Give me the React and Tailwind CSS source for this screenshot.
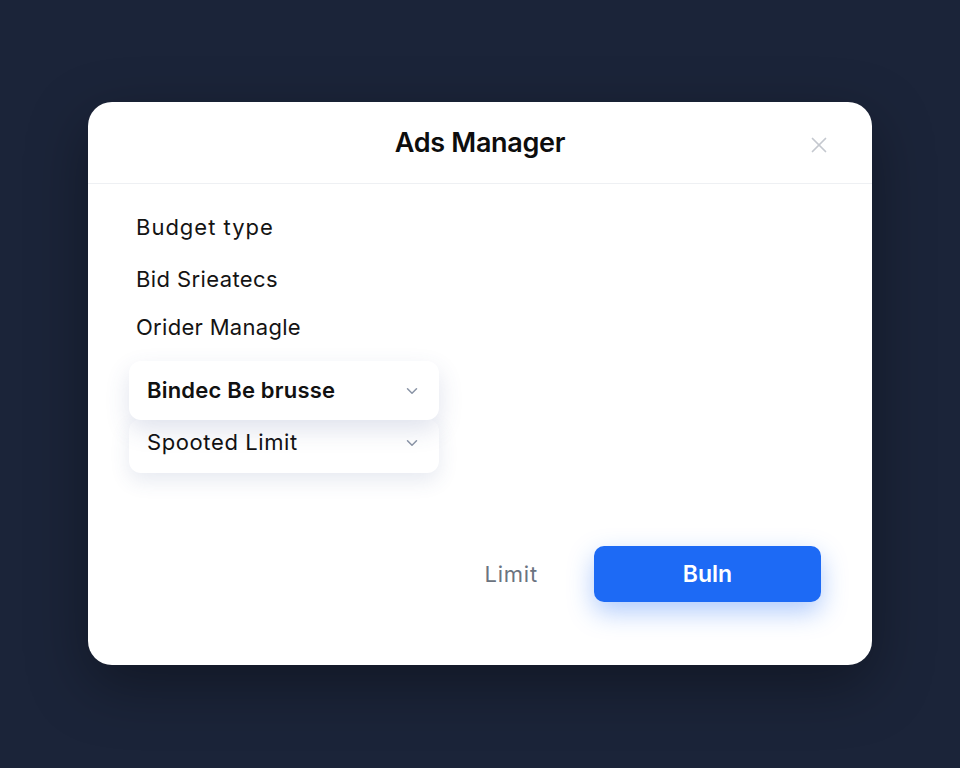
import React from 'react'
import { ChevronDown, X } from 'lucide-react'

function Select({ label, bold = false, raised = false }) {
  return (
    <div
      className={`flex items-center justify-between w-[310px] pl-[18px] pr-[18px] rounded-xl bg-white ${
        raised
          ? 'h-[59px] relative z-10 shadow-[0_10px_24px_rgba(60,80,140,0.16)]'
          : 'h-[54px] -mt-[1px] pb-[7px] shadow-[0_8px_20px_rgba(60,80,140,0.12)]'
      }`}
    >
      <span
        className={`text-[22px] text-[#111] ${
          bold ? 'font-semibold tracking-[0.2px]' : 'font-normal tracking-[0.6px]'
        }`}
      >
        {label}
      </span>
      <ChevronDown className="w-[18px] h-[18px] text-[#8a94a6]" strokeWidth={2} />
    </div>
  )
}

export default function App() {
  return (
    <div
      className="w-[960px] h-[768px] bg-[#1b2439] flex items-start justify-center pt-[102px]"
      style={{ fontFamily: 'Inter, "Noto Sans", sans-serif' }}
    >
      {/* Dialog */}
      <div className="w-[784px] h-[563px] bg-white rounded-[24px] flex flex-col shadow-[0_20px_60px_rgba(0,0,0,0.35)]">
        {/* Header */}
        <div className="relative h-[82px] flex items-center justify-center border-b border-[#eef0f3]">
          <h1 className="text-[27px] font-semibold text-[#0d0d0d] tracking-[-0.3px] mt-[2px]">Ads Manager</h1>
          <button className="absolute right-[40px] top-[30px] text-[#c4c8cf]">
            <X className="w-[26px] h-[26px]" strokeWidth={1.6} />
          </button>
        </div>

        {/* Body */}
        <div className="flex-1 flex flex-col pl-[41px] pr-[51px]">
          <div className="flex flex-col pl-[7px] pt-[30px] gap-[25px] text-[22px] text-[#141414]">
            <p className="leading-[27px] tracking-[1px]">Budget type</p>
            <p className="leading-[27px] tracking-[0.4px]">Bid Srieatecs</p>
            <p className="leading-[27px] tracking-[0.3px] -mt-[4px]">Orider Managle</p>
          </div>

          <div className="flex flex-col mt-[20px]">
            <Select label="Bindec Be brusse" bold raised />
            <Select label="Spooted Limit" />
          </div>

          {/* Footer */}
          <div className="flex items-center justify-end gap-[56px] mt-[73px]">
            <button className="text-[22px] tracking-[0.8px] text-[#6b7380]">Limit</button>
            <button className="w-[227px] h-[56px] rounded-[10px] bg-[#1d6af5] text-white text-[23px] font-semibold shadow-[0_10px_26px_rgba(29,106,245,0.35)]">
              Buln
            </button>
          </div>
        </div>
      </div>
    </div>
  )
}
